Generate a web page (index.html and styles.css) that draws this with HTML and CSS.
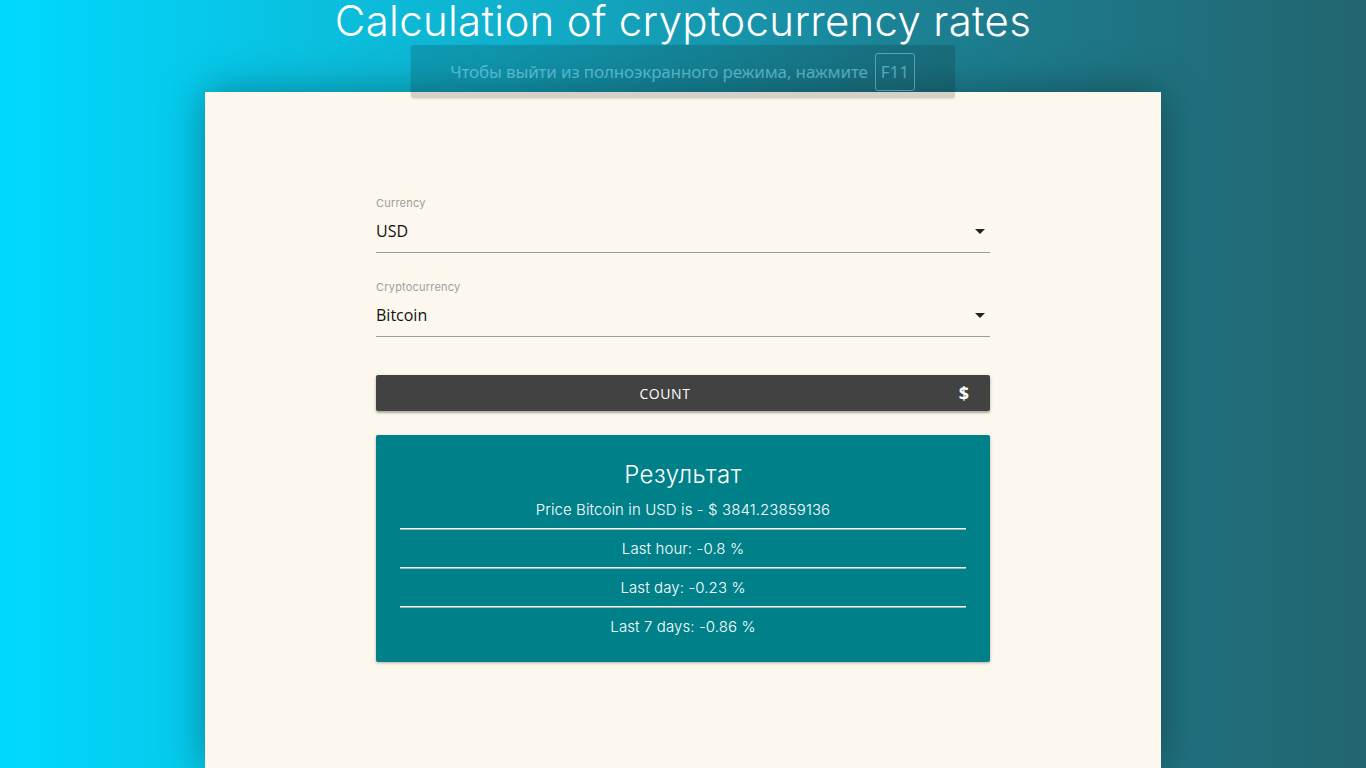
FILE: index.html
```html
<!DOCTYPE html>
<html lang="en">
<head>
<meta charset="utf-8">
<title>Calculation of cryptocurrency rates</title>
<link rel="stylesheet" href="styles.css">
</head>
<body>
  <header class="header">
    <h1 class="title">Calculation of cryptocurrency rates</h1>
  </header>
  <main class="card">
    <form class="form">
      <div class="field">
        <label class="field-label">Currency</label>
        <div class="field-select">
          <span class="field-value">USD</span>
          <span class="caret"></span>
        </div>
      </div>
      <div class="field">
        <label class="field-label">Cryptocurrency</label>
        <div class="field-select">
          <span class="field-value">Bitcoin</span>
          <span class="caret"></span>
        </div>
      </div>
      <button type="button" class="btn">
        <span class="btn-text">COUNT</span>
        <span class="btn-icon">$</span>
      </button>
      <section class="result">
        <h2 class="result-title">Результат</h2>
        <p class="result-row">Price Bitcoin in USD is - $ 3841.23859136</p>
        <hr class="result-sep">
        <p class="result-row">Last hour: -0.8 %</p>
        <hr class="result-sep">
        <p class="result-row">Last day: -0.23 %</p>
        <hr class="result-sep">
        <p class="result-row">Last 7 days: -0.86 %</p>
      </section>
    </form>
  </main>
  <div class="fs-notice">
    <span class="fs-text">Чтобы выйти из полноэкранного режима, нажмите</span>
    <span class="fs-key">F11</span>
  </div>
</body>
</html>
```

FILE: styles.css
```css
* { box-sizing: border-box; }

html, body {
  margin: 0;
  padding: 0;
  height: 100%;
}

body {
  background: linear-gradient(to right, #00d9ff 0%, #0fb3cf 35%, #1b8396 65%, #22656f 100%);
  font-family: "Inter", "Liberation Sans", sans-serif;
  display: flex;
  flex-direction: column;
  overflow: hidden;
}

.header {
  height: 92px;
  display: flex;
  justify-content: center;
}

.title {
  margin: 0;
  font-weight: 300;
  font-size: 42px;
  line-height: 41px;
  color: #ffffff;
  letter-spacing: 0.3px;
}

.card {
  width: 956px;
  margin: 0 auto;
  flex: 1;
  background: #fdf8ee;
  box-shadow: 0 0 40px rgba(0, 0, 0, 0.35);
  display: flex;
  justify-content: center;
  padding-top: 104px;
}

.form {
  width: 614px;
  display: flex;
  flex-direction: column;
}

.field {
  display: flex;
  flex-direction: column;
  margin-bottom: 27px;
}

.field-label {
  font-family: "Inter", "Liberation Sans", sans-serif;
  font-size: 11px;
  line-height: 14px;
  color: #9e9e9e;
  font-weight: 400;
  letter-spacing: 0.2px;
}

.field-select {
  display: flex;
  align-items: center;
  justify-content: space-between;
  height: 39px;
  padding-bottom: 4px;
  border-bottom: 1px solid #9e9e9e;
  margin-top: 4px;
}

.field-value {
  font-family: "Open Sans", "Liberation Sans", sans-serif;
  font-size: 16px;
  color: #111;
}

.caret {
  width: 0;
  height: 0;
  border-left: 5px solid transparent;
  border-right: 5px solid transparent;
  border-top: 5px solid #222;
  margin-right: 5px;
}

.btn {
  margin-top: 11px;
  height: 36px;
  border: none;
  border-radius: 2px;
  background: #424242;
  color: #fff;
  display: flex;
  align-items: center;
  padding: 0 22px 0 16px;
  gap: 22px;
  box-shadow: 0 2px 2px rgba(0, 0, 0, 0.25), 0 1px 4px rgba(0, 0, 0, 0.12);
  font-family: "Open Sans", "Liberation Sans", sans-serif;
  cursor: pointer;
}

.btn-text {
  flex: 1;
  text-align: center;
  font-size: 14px;
  letter-spacing: 0.6px;
}

.btn-icon {
  font-size: 18px;
  font-weight: 700;
  width: 8px;
  display: flex;
  justify-content: center;
}

.result {
  margin-top: 24px;
  background: #00818a;
  border-radius: 2px;
  box-shadow: 0 1px 3px rgba(0, 0, 0, 0.3);
  padding: 24px 24px 17px;
  color: #ffffff;
  text-align: center;
}

.result-title {
  margin: 0;
  font-weight: 300;
  font-size: 24px;
  line-height: 32px;
  letter-spacing: 0.5px;
}

.result-row {
  margin: 0;
  height: 37px;
  line-height: 37px;
  font-size: 15px;
  font-weight: 300;
  letter-spacing: 0.1px;
}

.result-sep {
  margin: 0;
  height: 2px;
  border: none;
  border-top: 1px solid #f3f3f3;
  border-bottom: 1px solid #9ab7ba;
}

.fs-notice {
  position: absolute;
  top: 45px;
  left: 411px;
  width: 544px;
  height: 53px;
  background: rgba(20, 20, 20, 0.17);
  border-radius: 3px;
  box-shadow: 0 1px 2px rgba(0, 0, 0, 0.12);
  display: flex;
  align-items: center;
  justify-content: flex-end;
  gap: 7px;
  padding-right: 40px;
  font-family: "Noto Sans", "Open Sans", sans-serif;
  color: rgba(150, 230, 250, 0.5);
}

.fs-text {
  font-size: 17px;
  letter-spacing: -0.15px;
}

.fs-key {
  font-size: 17px;
  border: 1px solid rgba(150, 230, 250, 0.45);
  border-radius: 3px;
  padding: 0 5px;
  height: 38px;
  display: flex;
  align-items: center;
}
```
